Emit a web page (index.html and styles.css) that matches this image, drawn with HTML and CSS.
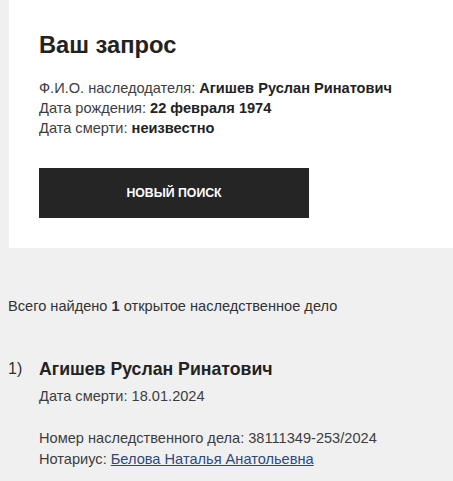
FILE: index.html
```html
<!DOCTYPE html>
<html lang="ru">
<head>
<meta charset="utf-8">
<link rel="stylesheet" href="styles.css">
</head>
<body>
<div class="page">
  <section class="card">
    <h1 class="title">Ваш запрос</h1>
    <div class="query">
      <div>Ф.И.О. наследодателя: <b>Агишев Руслан Ринатович</b></div>
      <div>Дата рождения: <b>22 февраля 1974</b></div>
      <div>Дата смерти: <b>неизвестно</b></div>
    </div>
    <button class="btn">НОВЫЙ ПОИСК</button>
  </section>
  <p class="total">Всего найдено <b>1</b> открытое наследственное дело</p>
  <div class="result">
    <div class="num">1)</div>
    <div class="body">
      <div class="name">Агишев Руслан Ринатович</div>
      <div class="death">Дата смерти: 18.01.2024</div>
      <div class="info">
        <div>Номер наследственного дела: 38111349-253/2024</div>
        <div>Нотариус: <a href="#" class="link">Белова Наталья Анатольевна</a></div>
      </div>
    </div>
  </div>
</div>
</body>
</html>
```
FILE: styles.css
```css
html, body {
  margin: 0;
  padding: 0;
  background: #f0f0f0;
}
body {
  font-family: "Liberation Sans", Arial, sans-serif;
  color: #2b2b2b;
  font-size: 14.6px;
}
.page {
  padding-left: 9px;
}
.card {
  background: #fff;
  padding: 32px 30px 30px 30px;
}
.title {
  margin: 0;
  font-size: 23.7px;
  font-weight: 700;
  color: #222;
  line-height: 26px;
}
.query {
  margin-top: 20px;
  line-height: 20px;
  color: #3d3d3d;
}
.query b {
  color: #222;
}
.btn {
  margin-top: 30px;
  width: 270px;
  height: 50px;
  background: #252525;
  color: #fff;
  border: none;
  font-family: "Liberation Sans", Arial, sans-serif;
  font-weight: 700;
  font-size: 12.3px;
  display: block;
  padding: 0;
}
.total {
  margin: 48px 0 0 -1px;
  line-height: 20px;
  color: #333;
}
.result {
  display: flex;
  margin: 41px 0 0 -1px;
}
.num {
  width: 31px;
  font-size: 16px;
  line-height: 24px;
  color: #333;
}
.name {
  font-size: 17.7px;
  font-weight: 700;
  line-height: 24px;
  color: #222;
}
.death {
  margin-top: 5px;
  line-height: 20px;
  color: #3d3d3d;
}
.info {
  margin-top: 22px;
  line-height: 21px;
  color: #3d3d3d;
}
.link {
  color: #2d4a7a;
  text-decoration: underline;
}
```
